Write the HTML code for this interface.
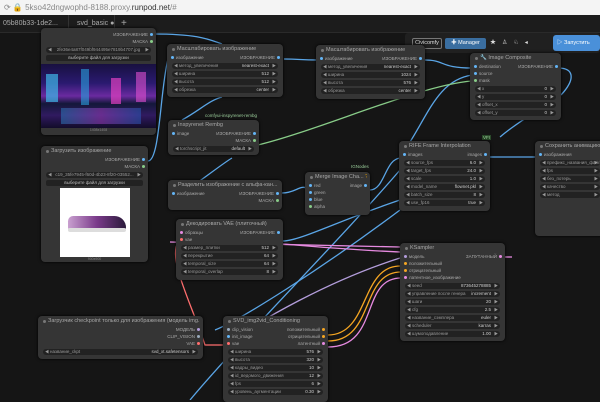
<!DOCTYPE html>
<html><head><meta charset="utf-8"><style>
*{box-sizing:border-box;margin:0;padding:0}
body{width:600px;height:400px;overflow:hidden;background:#151515;font-family:"Liberation Sans","Noto Sans CJK SC",sans-serif;position:relative}
.bar{position:absolute;left:0;top:0;width:600px;height:15px;background:#f4f4f4;font-size:8px;color:#888;line-height:15px}
.tabs{position:absolute;left:0;top:15px;width:600px;height:18px;background:#1c1c1c;border-bottom:1px solid #2a2a2a;font-size:7px;color:#aaa;line-height:18px}
.n{position:absolute;background:#353535;border-radius:4px;box-shadow:0 0 3px #000;font-size:4.5px;color:#aaa;padding:0 3px}
.t{height:10px;line-height:10px;color:#a8a8a8;font-size:5.5px;padding-left:7px;position:relative;white-space:nowrap;overflow:hidden}
.t:before{content:"";position:absolute;left:2px;top:4px;width:3px;height:3px;border-radius:50%;background:#777}
.r{height:7px;line-height:7px;position:relative;padding-left:6px;white-space:nowrap}
.r .o{position:absolute;right:5px;top:0}
.r:before{content:"";position:absolute;left:1px;top:2px;width:3px;height:3px;border-radius:50%;background:var(--c,transparent)}
.r .o:after{content:"";position:absolute;right:-5px;top:2px;width:3px;height:3px;border-radius:50%;background:var(--d,#64b5f6)}
.w{height:6px;line-height:6px;background:#222;border-radius:3px;margin:2px 2px;padding:0 7px;position:relative;white-space:nowrap;overflow:hidden;color:#999}
.w:before{content:"◀";position:absolute;left:2px;font-size:4px}
.w:after{content:"▶";position:absolute;right:2px;font-size:4px}
.w b{position:absolute;right:9px;font-weight:normal;color:#ccc}
.btn{height:6px;line-height:6px;background:#222;border-radius:2px;margin:2px;text-align:center;color:#bbb}
.lab{position:absolute;font-size:4.5px;color:#9c9}
</style></head><body>
<svg width="600" height="400" style="position:absolute;left:0;top:0" fill="none" stroke-width="1.3">
<g stroke="#5aa5e6">
<path d="M154 34 C200 34 210 40 222 44"/>
<path d="M284 59 C300 59 300 60 318 60"/>
<path d="M425 60 C445 60 440 68 472 68"/>
<path d="M148 161 C160 161 160 90 168 59"/>
<path d="M182 120 C200 110 210 100 222 97"/>
<path d="M170 200 C190 190 220 165 232 158"/>
<path d="M282 193 C295 193 300 185 306 188"/>
<path d="M370 190 C385 190 385 158 401 158"/>
<path d="M490 157 L537 157"/>
<path d="M558 68 C575 68 575 80 561 95"/>
<path d="M410 142 C430 110 440 80 472 75"/>
<path d="M283 241 C300 241 340 220 400 200"/>
<path d="M190 400 C240 340 340 240 400 170"/>
<path d="M215 330 C240 320 320 270 400 210"/>
<path d="M500 137 C520 120 540 110 545 105"/>
</g>
<path d="M258 145 C320 130 420 85 472 81" stroke="#8c8"/>
<path d="M170 242 L400 247" stroke="#e68ae0"/>
<path d="M283 244 C350 250 400 252 400 252" stroke="#e68ae0"/>
<path d="M225 345 C260 320 330 280 400 258" stroke="#b39ddb"/>
<path d="M328 335 C370 335 360 265 401 266" stroke="#f5a623"/>
<path d="M328 341 C375 341 360 272 401 272" stroke="#f5a623"/>
<path d="M328 347 C380 347 360 278 401 278" stroke="#e68ae0"/>
<path d="M505 257 L512 257" stroke="#e68ae0"/>
<path d="M178 242 C168 260 190 300 205 345 L225 345" stroke="#ff6e6e"/>
</svg>
<div class="bar"><span style="padding-left:4px">⟳ 🔒 5kso42dngwophd-8188.proxy.<span style="color:#333">runpod.net</span>/#</span></div>
<div class="tabs"><span style="padding-left:3px">05b80b33-1de2...</span><span style="position:absolute;left:68px;border-left:1px solid #333;padding:0 8px">svd_basic ●</span><span style="position:absolute;left:114px;border-left:1px solid #333;padding-left:6px;font-size:10px">+</span></div>

<div style="position:absolute;left:405px;top:33px;width:195px;height:20px;background:#202020;border-radius:3px"></div>
<div style="position:absolute;left:412px;top:38px;width:30px;height:11px;border:1px solid #777;border-radius:2px;font-size:5.5px;color:#ddd;text-align:center;line-height:9px">Civicomfy</div>
<div style="position:absolute;left:445px;top:38px;width:41px;height:11px;background:#3a6ea0;border-radius:2px;font-size:5.5px;color:#fff;text-align:center;line-height:11px">✚ Manager</div>
<div style="position:absolute;left:490px;top:38px;width:56px;height:11px;font-size:6px;color:#ddd;line-height:11px;letter-spacing:6px">★♙♘◂</div>
<div style="position:absolute;left:553px;top:35px;width:47px;height:16px;background:#4a90d9;border-radius:3px;font-size:5.5px;color:#fff;line-height:16px;padding-left:4px">▷ Запустить</div>

<div class="n" style="left:41px;top:28px;width:115px;height:107px">
<div class="r" style="margin-top:3px"><span class="o">ИЗОБРАЖЕНИЕ</span></div>
<div class="r" style="--d:#8c8"><span class="o">МАСКА</span></div>
<div class="w" style="text-align:center">2fe36e4a87f049bf944495e7819b4707.jpg</div>
<div class="btn">выберите файл для загрузки</div>
<div style="margin:3px -3px 0;height:64px;position:relative;overflow:hidden;background:linear-gradient(180deg,#181040 0%,#2a1a70 30%,#6a2aa0 50%,#14183a 62%,#301a60 80%,#120c2a 100%)">
<div style="position:absolute;left:5px;top:10px;width:12px;height:28px;background:#3fb6e8;opacity:.7"></div>
<div style="position:absolute;left:40px;top:5px;width:8px;height:36px;background:#2aa0e0;opacity:.6"></div>
<div style="position:absolute;left:70px;top:14px;width:10px;height:26px;background:#e040c0;opacity:.7"></div>
<div style="position:absolute;left:95px;top:8px;width:10px;height:30px;background:#e050d0;opacity:.6"></div>
<div style="position:absolute;left:20px;top:44px;width:80px;height:16px;background:linear-gradient(90deg,#2a80c0,#a040c0,#2a60c0);opacity:.5"></div>
</div>
<div style="text-align:center;font-size:3.5px;color:#888">1408x1408</div>
</div>

<div class="n" style="left:167px;top:44px;width:116px;height:53px">
<div class="t">Масштабировать изображение</div>
<div class="r" style="--c:#64b5f6">изображение<span class="o">ИЗОБРАЖЕНИЕ</span></div>
<div class="w">метод_увеличения<b>nearest-exact</b></div>
<div class="w">ширина<b>512</b></div>
<div class="w">высота<b>512</b></div>
<div class="w">обрезка<b>center</b></div>
</div>

<div class="n" style="left:316px;top:45px;width:109px;height:54px">
<div class="t">Масштабировать изображение</div>
<div class="r" style="--c:#64b5f6">изображение<span class="o">ИЗОБРАЖЕНИЕ</span></div>
<div class="w">метод_увеличения<b>nearest-exact</b></div>
<div class="w">ширина<b>1024</b></div>
<div class="w">высота<b>576</b></div>
<div class="w">обрезка<b>center</b></div>
</div>

<div class="n" style="left:470px;top:53px;width:91px;height:67px">
<div class="t">🔧 Image Composite</div>
<div class="r" style="--c:#64b5f6">destination<span class="o">ИЗОБРАЖЕНИЕ</span></div>
<div class="r" style="--c:#64b5f6">source</div>
<div class="r" style="--c:#8c8">mask</div>
<div class="w">x<b>0</b></div>
<div class="w">y<b>0</b></div>
<div class="w">offset_x<b>0</b></div>
<div class="w">offset_y<b>0</b></div>
</div>

<div class="lab" style="left:205px;top:113px">comfyui-inspyrenet-rembg</div>
<div class="n" style="left:168px;top:120px;width:91px;height:35px">
<div class="t">Inspyrenet Rembg</div>
<div class="r" style="--c:#64b5f6">image<span class="o">ИЗОБРАЖЕНИЕ</span></div>
<div class="r"><span class="o" style="--d:#8c8">МАСКА</span></div>
<div class="w">torchscript_jit<b>default</b></div>
</div>

<div class="n" style="left:41px;top:146px;width:107px;height:116px">
<div class="t">Загрузить изображение</div>
<div class="r"><span class="o">ИЗОБРАЖЕНИЕ</span></div>
<div class="r" style="--d:#8c8"><span class="o">МАСКА</span></div>
<div class="w" style="text-align:center">c19_35fe7945-f60d-4b23-8f20-03552...</div>
<div class="btn">выберите файл для загрузки</div>
<div style="margin:1px auto 0;width:70px;height:69px;background:#fff;position:relative">
<div style="position:absolute;left:8px;top:28px;width:58px;height:14px;background:linear-gradient(90deg,#c9a0d0,#7a3a8a,#2a1a3a);border-radius:8px 18px 4px 4px"></div>
<div style="position:absolute;left:8px;top:40px;width:58px;height:4px;background:#ddd;border-radius:2px"></div></div>
<div style="text-align:center;font-size:3.5px;color:#888">900x900</div>
</div>

<div class="n" style="left:168px;top:180px;width:114px;height:30px">
<div class="t">Разделить изображение с альфа-кан...</div>
<div class="r" style="--c:#64b5f6">изображение<span class="o">ИЗОБРАЖЕНИЕ</span></div>
<div class="r" style="--d:#8c8"><span class="o">МАСКА</span></div>
</div>

<div class="lab" style="left:351px;top:164px">IGNodes</div>
<div class="n" style="left:305px;top:172px;width:65px;height:43px">
<div class="t">Merge Image Cha... <span style="color:#d90">?</span></div>
<div class="r" style="--c:#64b5f6">red<span class="o">image</span></div>
<div class="r" style="--c:#64b5f6">green</div>
<div class="r" style="--c:#64b5f6">blue</div>
<div class="r" style="--c:#8c8">alpha</div>
</div>

<div class="lab" style="left:482px;top:135px;background:#2a4a2a;padding:0 1px">VFI</div>
<div class="n" style="left:399px;top:141px;width:91px;height:70px">
<div class="t">RIFE Frame Interpolation</div>
<div class="r" style="--c:#64b5f6">images<span class="o">images</span></div>
<div class="w">source_fps<b>6.0</b></div>
<div class="w">target_fps<b>24.0</b></div>
<div class="w">scale<b>1.0</b></div>
<div class="w">model_name<b>flownet.pkl</b></div>
<div class="w">batch_size<b>8</b></div>
<div class="w">use_fp16<b>true</b></div>
</div>

<div class="n" style="left:535px;top:141px;width:70px;height:95px">
<div class="t">Сохранить анимацию</div>
<div class="r" style="--c:#64b5f6">изображения</div>
<div class="w">префикс_названия_файла</div>
<div class="w">fps</div>
<div class="w">без_потерь</div>
<div class="w">качество</div>
<div class="w">метод</div>
</div>

<div class="n" style="left:176px;top:219px;width:107px;height:61px">
<div class="t">Декодировать VAE (плиточный)</div>
<div class="r" style="--c:#e68ae0">образцы<span class="o">ИЗОБРАЖЕНИЕ</span></div>
<div class="r" style="--c:#ff6e6e">vae</div>
<div class="w">размер_плитки<b>512</b></div>
<div class="w">перекрытие<b>64</b></div>
<div class="w">temporal_size<b>64</b></div>
<div class="w">temporal_overlap<b>8</b></div>
</div>

<div class="n" style="left:400px;top:243px;width:105px;height:98px">
<div class="t">KSampler</div>
<div class="r" style="--c:#b39ddb">модель<span class="o" style="--d:#e68ae0">ЗАПУТАННЫЙ</span></div>
<div class="r" style="--c:#f5a623">положительный</div>
<div class="r" style="--c:#f5a623">отрицательный</div>
<div class="r" style="--c:#e68ae0">латентное_изображение</div>
<div class="w">seed<b>873645278885</b></div>
<div class="w">управление после генера<b>increment</b></div>
<div class="w">шаги<b>20</b></div>
<div class="w">cfg<b>2.5</b></div>
<div class="w">название_сэмплера<b>euler</b></div>
<div class="w">scheduler<b>karras</b></div>
<div class="w">шумоподавление<b>1.00</b></div>
</div>

<div class="n" style="left:38px;top:316px;width:165px;height:43px">
<div class="t">Загрузчик checkpoint только для изображения (модель img...</div>
<div class="r"><span class="o" style="--d:#b39ddb">МОДЕЛЬ</span></div>
<div class="r"><span class="o" style="--d:#9ab">CLIP_VISION</span></div>
<div class="r"><span class="o" style="--d:#ff6e6e">VAE</span></div>
<div class="w">название_ckpt<b>svd_xt.safetensors</b></div>
</div>

<div class="n" style="left:223px;top:316px;width:105px;height:86px">
<div class="t">SVD_img2vid_Conditioning</div>
<div class="r" style="--c:#9ab">clip_vision<span class="o" style="--d:#f5a623">положительный</span></div>
<div class="r" style="--c:#64b5f6">init_image<span class="o" style="--d:#f5a623">отрицательный</span></div>
<div class="r" style="--c:#ff6e6e">vae<span class="o" style="--d:#e68ae0">латентный</span></div>
<div class="w">ширина<b>576</b></div>
<div class="w">высота<b>320</b></div>
<div class="w">кадры_видео<b>10</b></div>
<div class="w">id_ведомого_движения<b>12</b></div>
<div class="w">fps<b>6</b></div>
<div class="w">уровень_аугментации<b>0.30</b></div>
</div>
</body></html>
